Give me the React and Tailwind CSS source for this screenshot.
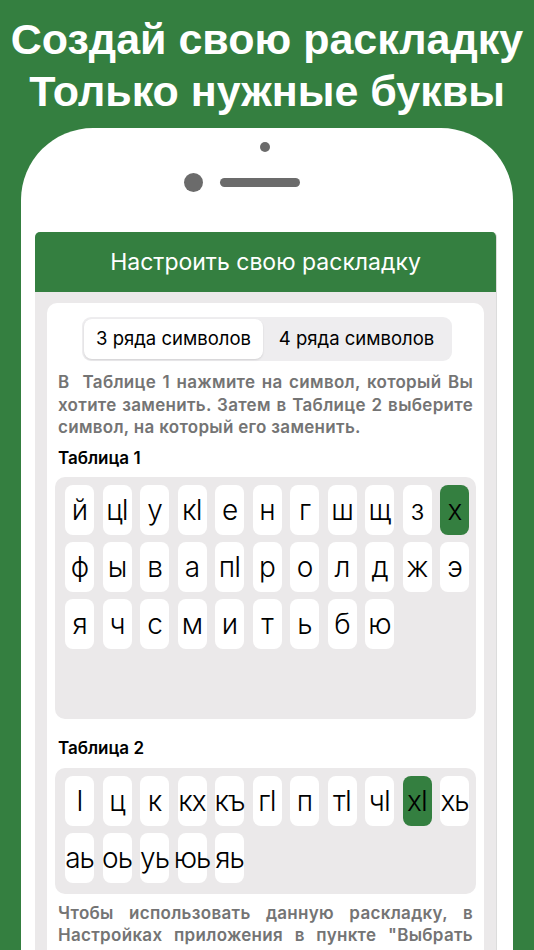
import React from 'react'

const GREEN = 'bg-[#347f40]'

const TABLE1 = [
  ['й', 'цІ', 'у', 'кІ', 'е', 'н', 'г', 'ш', 'щ', 'з', 'х'],
  ['ф', 'ы', 'в', 'а', 'пІ', 'р', 'о', 'л', 'д', 'ж', 'э'],
  ['я', 'ч', 'с', 'м', 'и', 'т', 'ь', 'б', 'ю'],
]

const TABLE2 = [
  ['І', 'ц', 'к', 'кх', 'къ', 'гІ', 'п', 'тІ', 'чІ', 'хІ', 'хь'],
  ['аь', 'оь', 'уь', 'юь', 'яь'],
]

function Key({ ch, active }) {
  return (
    <div
      className={`w-[29px] h-[50px] rounded-[8px] flex items-center justify-center overflow-visible whitespace-nowrap text-[28px] leading-none font-light text-black ${active ? 'bg-[#347f40]' : 'bg-white'}`}
    >
      <span className="tracking-[-1px]">{ch}</span>
    </div>
  )
}

function KeyTable({ rows, activeKey, height }) {
  return (
    <div className={`bg-[#ebe9ea] rounded-[10px] pl-[10px] pt-[8px] ${height}`}>
      <div className="flex flex-col gap-[7px]">
        {rows.map((row, i) => (
          <div key={i} className="flex gap-[8.5px]">
            {row.map(ch => (
              <Key key={ch} ch={ch} active={ch === activeKey} />
            ))}
          </div>
        ))}
      </div>
    </div>
  )
}

// абзац по ширине с заданными переносами
function Para({ lines, className }) {
  return (
    <div className={className}>
      {lines.map((l, i) => (
        <div key={i} className={i < lines.length - 1 ? 'whitespace-pre text-justify [text-align-last:justify]' : 'whitespace-pre'}>
          {l}
        </div>
      ))}
    </div>
  )
}

export default function App() {
  return (
    <div className={`w-[534px] h-[950px] overflow-hidden ${GREEN} flex flex-col`}>
      {/* Заголовок */}
      <div
        className="pt-[13px] text-white font-bold text-[43px] leading-[52px] text-center"
        style={{ fontFamily: '"Liberation Sans", Arial, sans-serif' }}
      >
        <div>Создай свою раскладку</div>
        <div>Только нужные буквы</div>
      </div>

      {/* Телефон */}
      <div
        className="mt-[11px] ml-[21px] w-[492px] flex-1 bg-white rounded-t-[72px] pl-[14px] pr-[16px] flex flex-col"
        style={{ fontFamily: 'Inter, "Noto Sans", sans-serif' }}
      >
        <div className="h-[104px] relative shrink-0">
          <div className="absolute left-[225px] top-[14px] w-[10px] h-[10px] rounded-full bg-[#6b6b6b]" />
          <div className="absolute left-[149px] top-[45px] w-[19px] h-[19px] rounded-full bg-[#6b6b6b]" />
          <div className="absolute left-[185px] top-[50px] w-[80px] h-[9px] rounded-full bg-[#6b6b6b]" />
        </div>

        {/* Экран */}
        <div className="flex-1 bg-[#ebe9ea] rounded-t-[5px] overflow-hidden border-r border-[#dcdcdc] flex flex-col">
          <div className={`${GREEN} h-[60px] shrink-0 flex items-center justify-center text-white text-[23px]`}>
            Настроить свою раскладку
          </div>

          <div className="flex-1 mt-[11px] mx-[12px] bg-white rounded-t-[10px] px-[8px] pt-[14px]">
            {/* Переключатель */}
            <div className="ml-[27px] w-[370px] h-[44px] bg-[#eeedef] rounded-[9px] p-[2px] flex text-[18.5px] text-black">
              <div className="w-[179px] bg-white rounded-[8px] shadow-[0_1px_2px_rgba(0,0,0,0.12)] flex items-center justify-center">
                3 ряда символов
              </div>
              <div className="flex-1 flex items-center justify-center">4 ряда символов</div>
            </div>

            <Para
              className="mt-[10px] px-[3px] text-[17px] leading-[22.5px] font-semibold text-[#747474] tracking-[0.3px]"
              lines={[
                'В  Таблице 1 нажмите на символ, который Вы',
                'хотите заменить. Затем в Таблице 2 выберите',
                'символ, на который его заменить.',
              ]}
            />

            <div className="mt-[8px] px-[3px] text-[17px] leading-[22px] font-semibold text-black">Таблица 1</div>
            <div className="mt-[8px]">
              <KeyTable rows={TABLE1} activeKey="х" height="h-[242px]" />
            </div>

            <div className="mt-[18px] px-[3px] text-[17px] leading-[22px] font-semibold text-black">Таблица 2</div>
            <div className="mt-[9px]">
              <KeyTable rows={TABLE2} activeKey="хІ" height="h-[126px]" />
            </div>

            <Para
              className="mt-[8px] px-[3px] text-[17px] leading-[22.5px] font-semibold text-[#747474] tracking-[0.3px]"
              lines={[
                'Чтобы использовать данную раскладку, в',
                'Настройках приложения в пункте "Выбрать',
                'раскладку" выберите "Своя раскладка".',
              ]}
            />
          </div>
        </div>
      </div>
    </div>
  )
}
